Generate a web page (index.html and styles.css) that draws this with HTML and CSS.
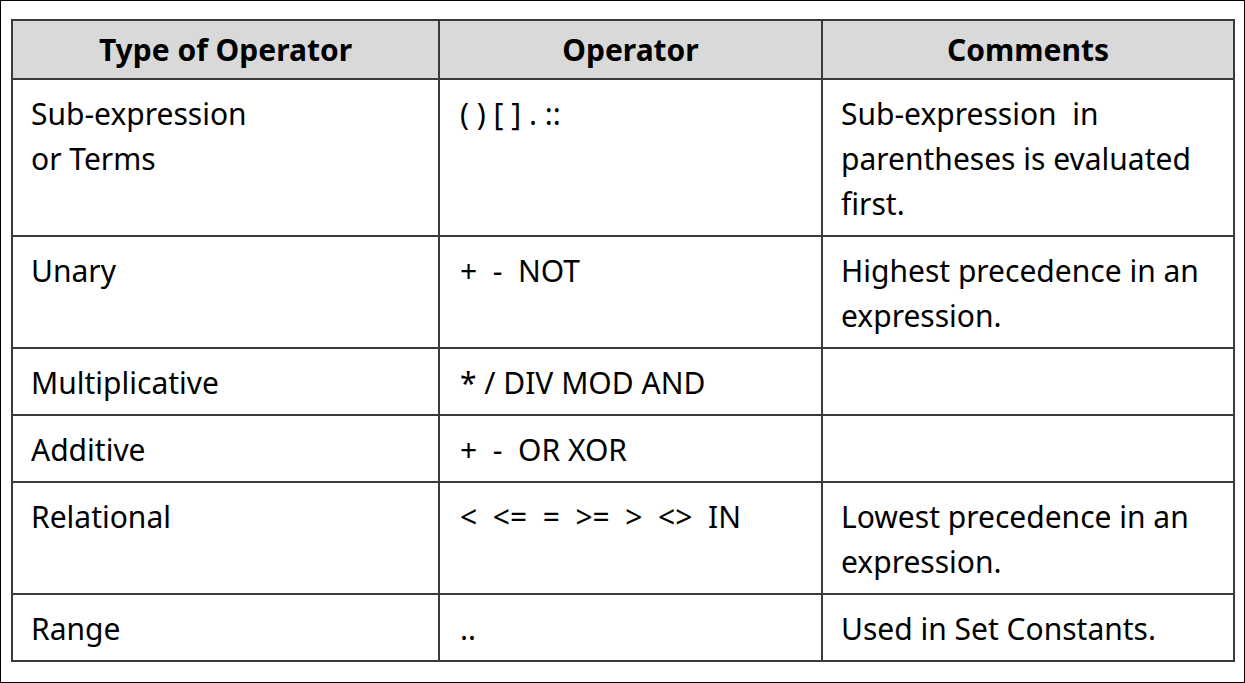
FILE: index.html
```html
<!DOCTYPE html>
<html>
<head>
<meta charset="utf-8">
<link rel="stylesheet" href="styles.css">
</head>
<body>
<div class="frame">
  <table class="ops">
    <colgroup>
      <col class="c1"><col class="c2"><col class="c3">
    </colgroup>
    <thead>
      <tr class="head"><th>Type of Operator</th><th>Operator</th><th>Comments</th></tr>
    </thead>
    <tbody>
      <tr><td>Sub-expression<br>or Terms</td><td class="op">( ) [ ] . ::</td><td>Sub-expression&nbsp; in<br>parentheses is evaluated<br>first.</td></tr>
      <tr><td>Unary</td><td class="op">+  -  NOT</td><td>Highest precedence in an<br>expression.</td></tr>
      <tr><td>Multiplicative</td><td class="op">* / DIV MOD AND</td><td></td></tr>
      <tr><td>Additive</td><td class="op">+  -  OR XOR</td><td></td></tr>
      <tr><td>Relational</td><td class="op">&lt;  &lt;=  =  &gt;=  &gt;  &lt;&gt;  IN</td><td>Lowest precedence in an<br>expression.</td></tr>
      <tr><td>Range</td><td class="op">..</td><td>Used in Set Constants.</td></tr>
    </tbody>
  </table>
</div>
</body>
</html>
```
FILE: styles.css
```css
html, body {
  margin: 0;
  padding: 0;
  background: #fff;
}
.frame {
  width: 1245px;
  height: 683px;
  box-sizing: border-box;
  border: 1px solid #000;
  padding: 18px 0 0 10px;
}
.ops {
  border-collapse: collapse;
  table-layout: fixed;
  width: 1222px;
  font-family: "Noto Sans", "Open Sans", sans-serif;
  font-size: 30px;
  color: #000;
}
.c1 { width: 427px; }
.c2 { width: 383px; }
.c3 { width: 412px; }
.ops th, .ops td {
  border: 2px solid #3a3a3a;
  text-align: left;
  vertical-align: top;
  line-height: 45px;
  padding: 11px 0 9px 18px;
}
.ops th {
  background: #d9d9d9;
  font-weight: bold;
  text-align: center;
  padding: 6px 0 6px 0;
}
.ops td.op {
  white-space: pre;
  padding-left: 20px;
}
```
